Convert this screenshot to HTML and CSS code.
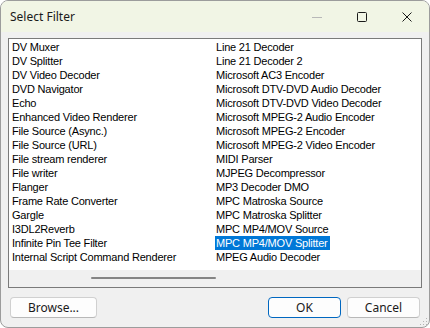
FILE: index.html
```html
<!DOCTYPE html>
<html lang="en">
<head>
<meta charset="UTF-8">
<title>Select Filter</title>
<link rel="stylesheet" href="styles.css">
</head>
<body>
<div class="window">
    <div class="titlebar">
        <span class="title">Select Filter</span>
        <div class="caption">
            <span class="cap-btn">
                <svg width="12" height="12" viewBox="0 0 12 12"><path d="M1 6.5h10" stroke="#b8b8b8" stroke-width="1"/></svg>
            </span>
            <span class="cap-btn">
                <svg width="12" height="12" viewBox="0 0 12 12"><rect x="1.5" y="1.5" width="9" height="9" rx="1" fill="none" stroke="#1a1a1a" stroke-width="1"/></svg>
            </span>
            <span class="cap-btn">
                <svg width="12" height="12" viewBox="0 0 12 12"><path d="M1.5 1.5l9 9M10.5 1.5l-9 9" stroke="#1a1a1a" stroke-width="1"/></svg>
            </span>
        </div>
    </div>
    <div class="content">
        <div class="listbox">
            <div class="columns">
                <ul class="col">
                    <li>DV Muxer</li>
                    <li>DV Splitter</li>
                    <li>DV Video Decoder</li>
                    <li>DVD Navigator</li>
                    <li>Echo</li>
                    <li>Enhanced Video Renderer</li>
                    <li>File Source (Async.)</li>
                    <li>File Source (URL)</li>
                    <li>File stream renderer</li>
                    <li>File writer</li>
                    <li>Flanger</li>
                    <li>Frame Rate Converter</li>
                    <li>Gargle</li>
                    <li>I3DL2Reverb</li>
                    <li>Infinite Pin Tee Filter</li>
                    <li>Internal Script Command Renderer</li>
                </ul>
                <ul class="col">
                    <li>Line 21 Decoder</li>
                    <li>Line 21 Decoder 2</li>
                    <li>Microsoft AC3 Encoder</li>
                    <li>Microsoft DTV-DVD Audio Decoder</li>
                    <li>Microsoft DTV-DVD Video Decoder</li>
                    <li>Microsoft MPEG-2 Audio Encoder</li>
                    <li>Microsoft MPEG-2 Encoder</li>
                    <li>Microsoft MPEG-2 Video Encoder</li>
                    <li>MIDI Parser</li>
                    <li>MJPEG Decompressor</li>
                    <li>MP3 Decoder DMO</li>
                    <li>MPC Matroska Source</li>
                    <li>MPC Matroska Splitter</li>
                    <li>MPC MP4/MOV Source</li>
                    <li><span class="selected">MPC MP4/MOV Splitter</span></li>
                    <li>MPEG Audio Decoder</li>
                </ul>
            </div>
            <div class="hscroll"><div class="thumb"></div></div>
        </div>
        <div class="buttons">
            <button class="btn browse">Browse...</button>
            <div class="spacer"></div>
            <button class="btn default">OK</button>
            <button class="btn">Cancel</button>
        </div>
    </div>
    <svg class="grip" width="10" height="10" viewBox="0 0 10 10">
        <g fill="#b4b4b4">
            <rect x="8" y="2" width="1" height="1"/>
            <rect x="5" y="5" width="1" height="1"/>
            <rect x="8" y="5" width="1" height="1"/>
            <rect x="2" y="8" width="1" height="1"/>
            <rect x="5" y="8" width="1" height="1"/>
            <rect x="8" y="8" width="1" height="1"/>
        </g>
    </svg>
</div>
</body>
</html>
```

FILE: styles.css
```css
body {
    margin: 0;
    background-color: #ffffff;
}
.window {
    position: relative;
    width: 430px;
    height: 328px;
    box-sizing: border-box;
    border: 1px solid #9c9c9c;
    border-radius: 8px;
    overflow: hidden;
    background-color: #f0f0f0;
    display: flex;
    flex-direction: column;
}
.titlebar {
    height: 31px;
    background-color: #f1f5e5;
    display: flex;
    align-items: center;
    padding-left: 9px;
}
.title {
    font-family: "Noto Sans", sans-serif;
    font-size: 12px;
    color: #1a1a1a;
    flex: 1;
}
.caption {
    display: flex;
    align-items: center;
}
.cap-btn {
    width: 45px;
    height: 31px;
    display: flex;
    align-items: center;
    justify-content: center;
}
.content {
    flex: 1;
    display: flex;
    flex-direction: column;
    padding: 6px 7px 0 7px;
}
.listbox {
    height: 250px;
    box-sizing: border-box;
    border: 1px solid #7a7a7a;
    background-color: #ffffff;
    display: flex;
    flex-direction: column;
}
.columns {
    display: flex;
    padding: 1px 0 0 2px;
    height: 230px;
}
.col {
    list-style: none;
    margin: 0;
    padding: 0;
    width: 204px;
    font-family: "Liberation Sans", Arial, sans-serif;
    font-size: 11px;
    letter-spacing: -0.2px;
    color: #000000;
}
.col li {
    height: 14px;
    line-height: 14px;
    white-space: nowrap;
    padding-left: 1px;
}
.col li .selected {
    display: inline-block;
    margin-left: -1px;
    padding-left: 1px;
    padding-right: 2px;
    background-color: #0078d7;
    color: #ffffff;
}
.hscroll {
    flex: 1;
    background-color: #f0f0f0;
    position: relative;
}
.thumb {
    position: absolute;
    left: 82px;
    top: 7px;
    width: 125px;
    height: 2px;
    border-radius: 1px;
    background-color: #858585;
}
.buttons {
    display: flex;
    gap: 6px;
    margin-top: 9px;
    padding-left: 2px;
    padding-right: 2px;
}
.spacer {
    flex: 1;
}
.btn {
    font-family: "Noto Sans", sans-serif;
    font-size: 12px;
    color: #1a1a1a;
    height: 21px;
    width: 73px;
    padding: 0;
    background-color: #fdfdfd;
    border: 1px solid #d0d0d0;
    border-bottom-color: #b8b8b8;
    border-radius: 4px;
    line-height: 18px;
}
.btn.browse {
    width: 87px;
}
.btn.default {
    border: 1px solid #0067c0;
}
.grip {
    position: absolute;
    right: 1px;
    bottom: 1px;
}
```
